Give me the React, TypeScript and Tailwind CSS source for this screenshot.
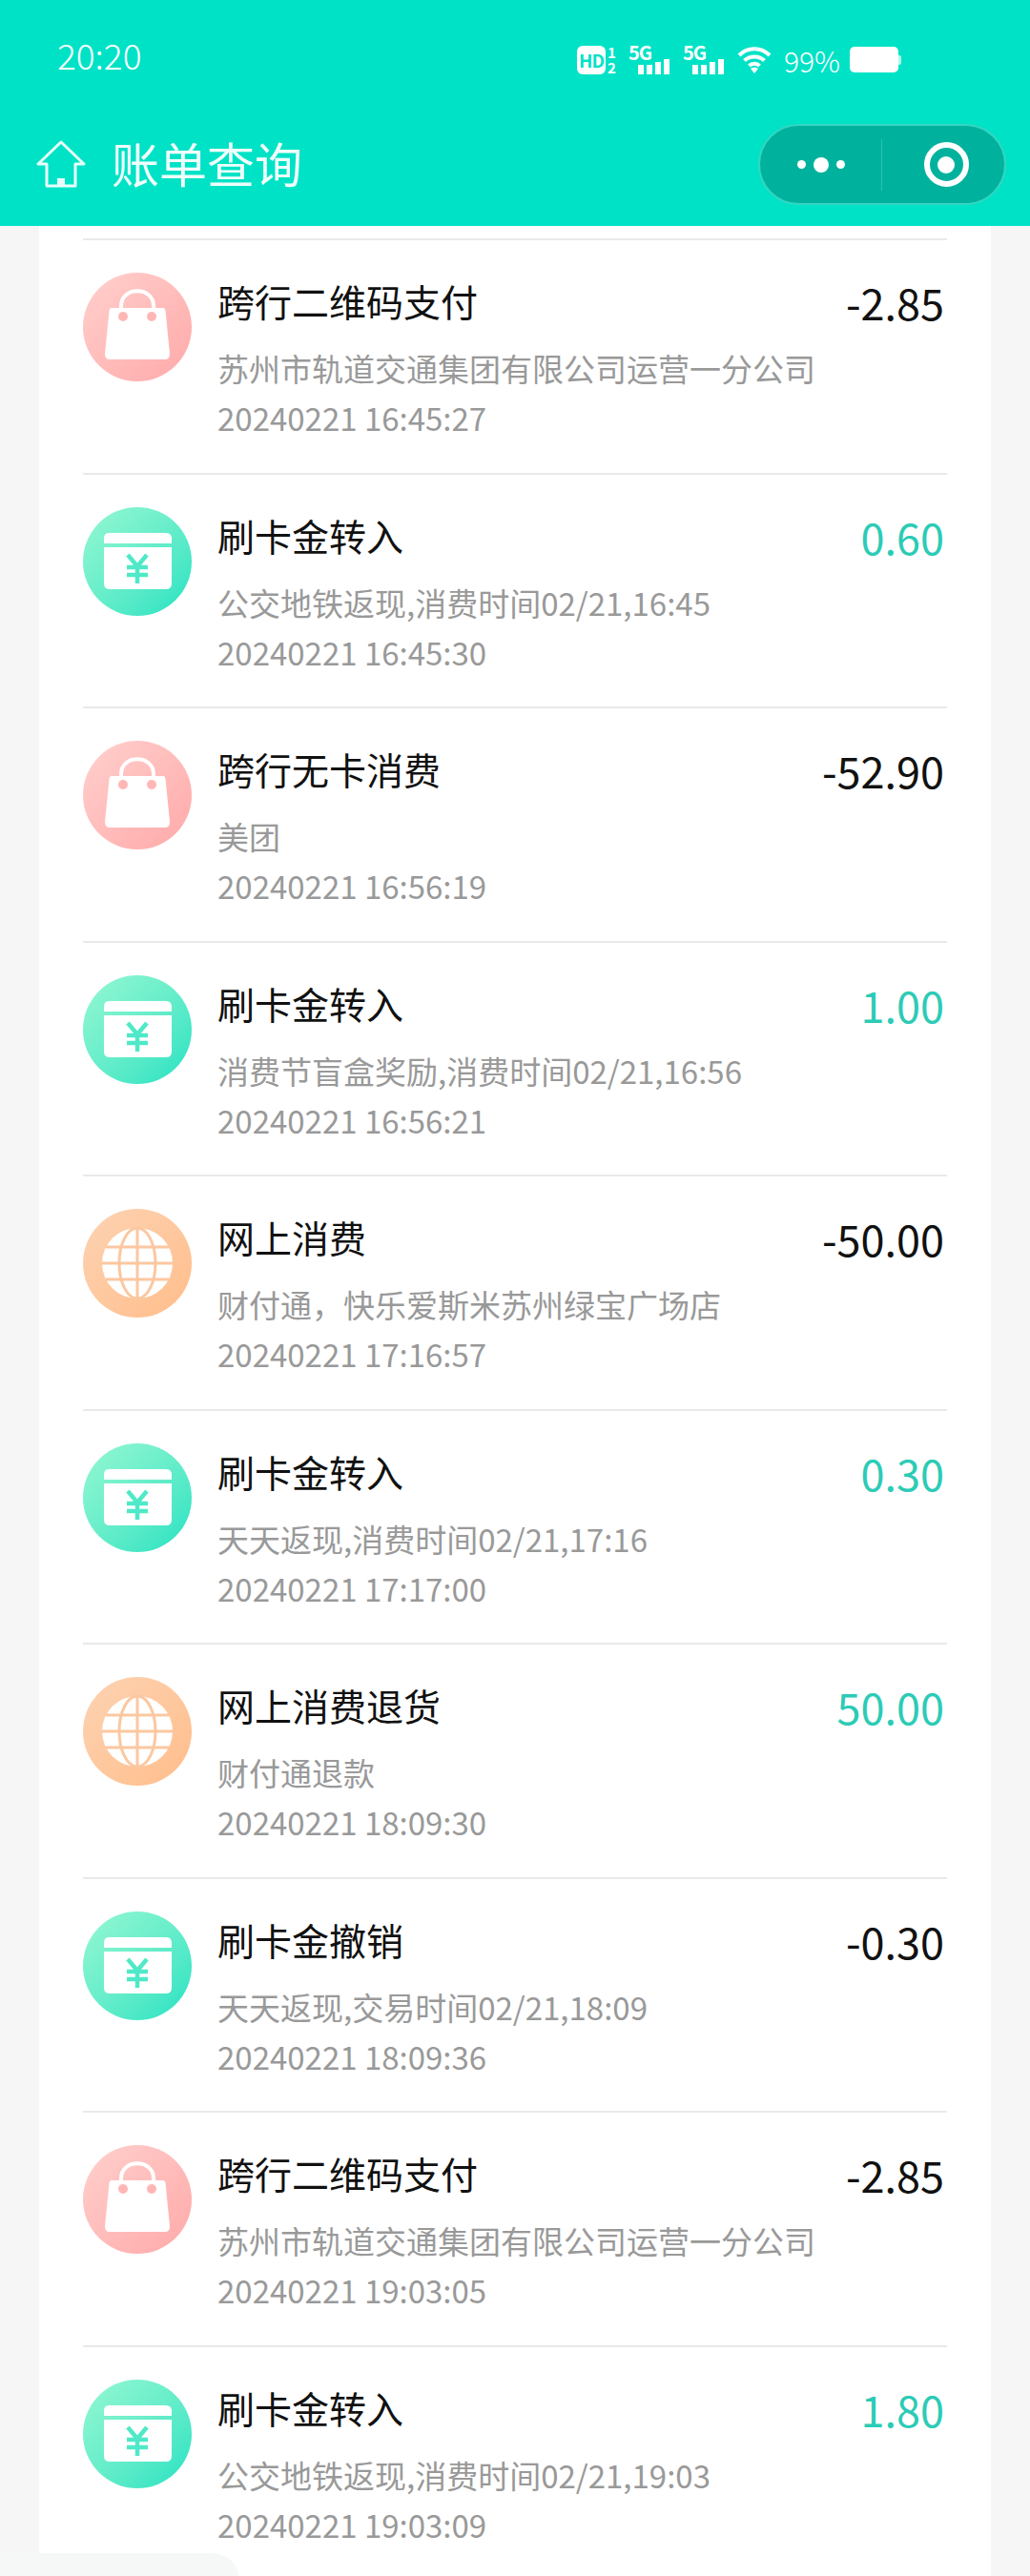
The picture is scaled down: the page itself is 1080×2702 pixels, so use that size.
const rows = [
  { k: "bag", t: "跨行二维码支付", s: "苏州市轨道交通集团有限公司运营一分公司", d: "20240221 16:45:27", a: "-2.85" },
  { k: "card", t: "刷卡金转入", s: "公交地铁返现,消费时间02/21,16:45", d: "20240221 16:45:30", a: "0.60" },
  { k: "bag", t: "跨行无卡消费", s: "美团", d: "20240221 16:56:19", a: "-52.90" },
  { k: "card", t: "刷卡金转入", s: "消费节盲盒奖励,消费时间02/21,16:56", d: "20240221 16:56:21", a: "1.00" },
  { k: "globe", t: "网上消费", s: "财付通，快乐爱斯米苏州绿宝广场店", d: "20240221 17:16:57", a: "-50.00" },
  { k: "card", t: "刷卡金转入", s: "天天返现,消费时间02/21,17:16", d: "20240221 17:17:00", a: "0.30" },
  { k: "globe", t: "网上消费退货", s: "财付通退款", d: "20240221 18:09:30", a: "50.00" },
  { k: "card", t: "刷卡金撤销", s: "天天返现,交易时间02/21,18:09", d: "20240221 18:09:36", a: "-0.30" },
  { k: "bag", t: "跨行二维码支付", s: "苏州市轨道交通集团有限公司运营一分公司", d: "20240221 19:03:05", a: "-2.85" },
  { k: "card", t: "刷卡金转入", s: "公交地铁返现,消费时间02/21,19:03", d: "20240221 19:03:09", a: "1.80" },
];

function Bag() {
  return (
    <div className="flex h-[114px] w-[114px] shrink-0 items-center justify-center rounded-full bg-gradient-to-br from-[#ffd0cd] to-[#ffa9a9]">
      <svg width="114" height="114" viewBox="0 0 114 114">
        <path d="M40 42 V35 C40 14 74 14 74 35 V42" fill="none" stroke="#fff" strokeWidth="4" />
        <path d="M30 37 H84 Q86 37 86.500 40 L91 85 Q91 91 86 91 H28 Q23 91 23 85 L27.500 40 Q28 37 30 37 Z" fill="#fff" />
        <circle cx="42" cy="46" r="5" fill="#ffb7b6" />
        <circle cx="72" cy="46" r="5" fill="#ffb7b6" />
      </svg>
    </div>
  );
}

function Card() {
  return (
    <div className="flex h-[114px] w-[114px] shrink-0 items-center justify-center rounded-full bg-gradient-to-br from-[#93f8d2] to-[#12e2c2]">
      <svg width="114" height="114" viewBox="0 0 114 114">
        <path d="M27 27 H87 Q93 27 93 33 V38 H22 V33 Q22 27 27 27 Z" fill="#fff" />
        <path d="M22 42 H93 V80 Q93 86 87 86 H28 Q22 86 22 80 Z" fill="#fff" />
        <path d="M47 50 L57 62 L67 50 M57 62 V80 M46 63 H68 M46 71 H68" fill="none" stroke="#4fe9c8" strokeWidth="4.500" />
      </svg>
    </div>
  );
}

function Globe() {
  return (
    <div className="flex h-[114px] w-[114px] shrink-0 items-center justify-center rounded-full bg-gradient-to-br from-[#fdd3b3] to-[#ffbd8a]">
      <svg width="114" height="114" viewBox="0 0 114 114">
        <circle cx="57" cy="57" r="37" fill="#fff" />
        <g fill="none" stroke="#fcc7a0" strokeWidth="3">
          <ellipse cx="57" cy="57" rx="19" ry="37" />
          <path d="M57 20 V94 M20 57 H94 M24 40 H90 M24 74 H90" />
        </g>
      </svg>
    </div>
  );
}

function Signal() {
  return (
    <span className="relative block h-[31px] w-[44px]">
      <span className="absolute left-0 top-[-3px] text-[20px] font-bold leading-[22px] tracking-[-1px] text-white">5G</span>
      <span className="absolute bottom-0 left-[10px] flex items-end gap-[3px]">
        <i className="block h-[10px] w-[6px] bg-white" />
        <i className="block h-[10px] w-[6px] bg-white" />
        <i className="block h-[13px] w-[6px] bg-white" />
        <i className="block h-[16px] w-[6px] bg-white" />
      </span>
    </span>
  );
}

function Row({ r }: { r: (typeof rows)[number] }) {
  const positive = !r.a.startsWith("-");
  return (
    <div className="mx-[46px] flex h-[245.500px] border-t-2 border-[#e9e9e9] pt-[34px]">
      {r.k === "bag" ? <Bag /> : r.k === "card" ? <Card /> : <Globe />}
      <div className="ml-[27px] min-w-0 flex-1 pt-[3px]">
        <div className="h-[52px] text-[39px] leading-[52px] text-[#111]">{r.t}</div>
        <div className="mt-[19px] h-[52px] whitespace-nowrap text-[33px] leading-[52px] text-[#999]">{r.s}</div>
        <div className="text-[33px] leading-[52px] text-[#999]">{r.d}</div>
      </div>
      <div className={"whitespace-nowrap pr-[3px] pt-[5px] text-[45px] leading-[52px] " + (positive ? "text-[#2ccbb6]" : "text-[#111]")}>{r.a}</div>
    </div>
  );
}

export default function App() {
  return (
    <div className="relative h-[2702px] w-[1080px] overflow-hidden bg-[#f6f6f6] font-['Noto_Sans_CJK_SC','Noto_Sans',sans-serif]">
      <header className="h-[237px] bg-[#00e2c6] text-white">
        <div className="flex h-[118px] items-start pl-[60px] pr-[135px]">
          <span className="mt-[35px] text-[37px] font-light leading-[44px]">20:20</span>
          <div className="ml-auto mt-[47px] flex h-[31px] items-center">
            <span className="flex h-[30px] w-[30px] items-center justify-center rounded-[6px] bg-white text-[19px] font-bold leading-none tracking-[-1px] text-[#00e2c6]">HD</span>
            <span className="ml-[1px] flex h-[31px] w-[11px] flex-col items-center justify-between text-[15px] font-bold leading-[15px]"><span>1</span><span>2</span></span>
            <span className="ml-[12px]"><Signal /></span>
            <span className="ml-[13px]"><Signal /></span>
            <svg className="ml-[13px]" width="36" height="30" viewBox="0 0 36 30" fill="none" stroke="#fff" strokeWidth="4">
              <path d="M2 10 C11 1 25 1 34 10 M7.500 15.500 C13 10 23 10 28.500 15.500 M12.500 21 C15.500 18 20.500 18 23.500 21" />
              <path d="M14 24 L18 29 L22 24 Q18 21 14 24 Z" fill="#fff" stroke="none" />
            </svg>
            <span className="ml-[13px] w-[58px] whitespace-nowrap text-[30px] font-light leading-[32px]">99%</span>
            <span className="ml-[11px] h-[27px] w-[51px] rounded-[5px] bg-white" />
            <span className="h-[10px] w-[3px] rounded-r-[2px] bg-white/70" />
          </div>
        </div>
        <div className="flex h-[119px] items-start">
          <svg className="ml-[38px] mt-[29px]" width="52" height="50" viewBox="0 0 52 50" fill="none" stroke="#e6fffb" strokeWidth="3" strokeLinejoin="round">
            <path d="M26 2 L50 25 H41 V48 H11 V25 H2 Z" />
            <path d="M22 48 V40 H30 V48" fill="#e6fffb" stroke="none" />
          </svg>
          <h1 className="ml-[27px] mt-[20px] text-[50px] font-normal leading-[64px] text-[#effffc]">账单查询</h1>
          <div className="ml-auto mr-[25px] mt-[12px] flex h-[85px] w-[260px] items-center rounded-full border-2 border-[#34d6c2] bg-[#00b29d]">
            <div className="flex h-[54px] w-[128px] items-center justify-center gap-[8px] border-r border-[#25c3af]">
              <i className="block h-[9px] w-[9px] rounded-full bg-white" />
              <i className="block h-[16px] w-[16px] rounded-full bg-white" />
              <i className="block h-[9px] w-[9px] rounded-full bg-white" />
            </div>
            <div className="flex flex-1 items-center justify-center pl-[6px]">
              <span className="flex h-[47px] w-[47px] items-center justify-center rounded-full border-[6px] border-white">
                <i className="block h-[18px] w-[18px] rounded-full bg-white" />
              </span>
            </div>
          </div>
        </div>
      </header>
      <main className="mx-[41px] h-[2465px] overflow-hidden bg-white pt-[13px]">
        {rows.map((r, i) => <Row key={i} r={r} />)}
      </main>
      <div className="absolute bottom-0 left-0 h-[24px] w-[250px] rounded-tr-[30px_24px] bg-[#f6f7f7]" />
    </div>
  );
}
